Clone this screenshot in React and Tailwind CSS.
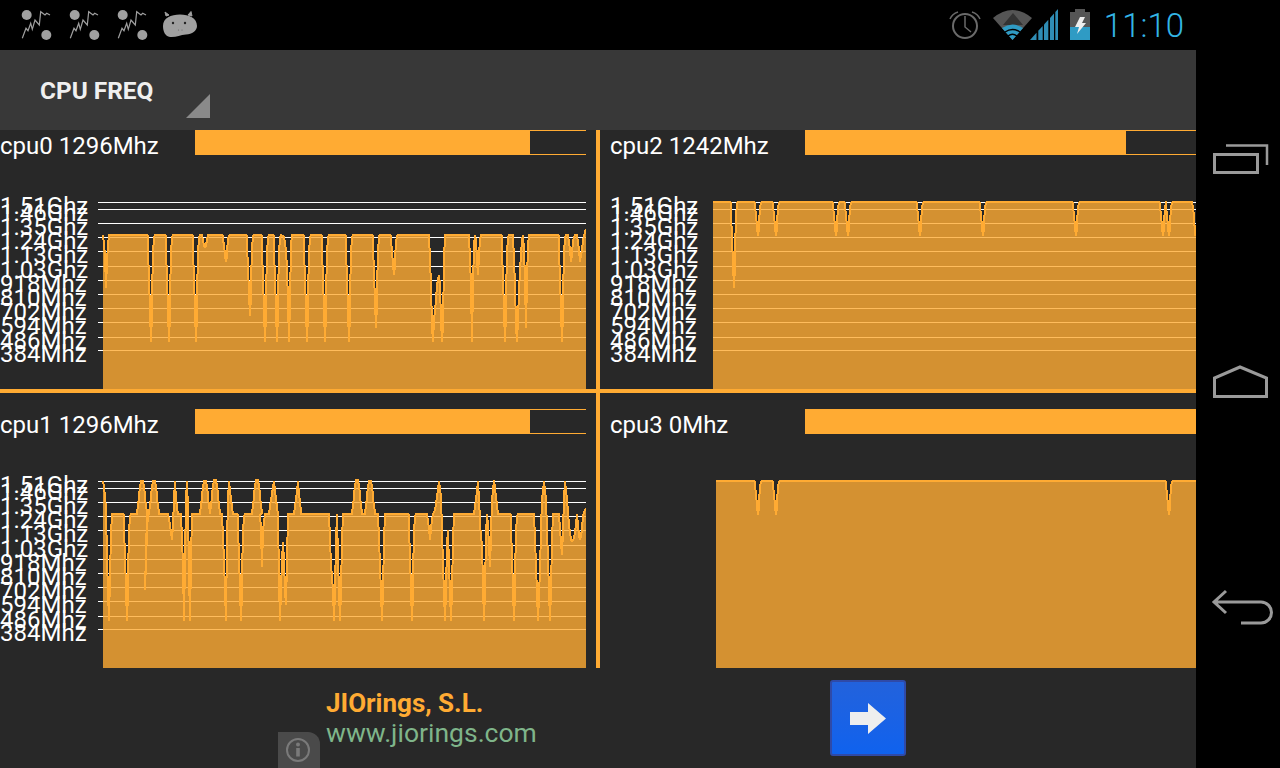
const ORANGE = "#ffab33";

function dip(c, b, T) {
  const D = b - T;
  return [[c - 3.5, T], [c - 2.8, T + 0.06 * D], [c - 2.2, T + 0.47 * D], [c - 1.6, T + 0.5 * D], [c - 1, T + 0.85 * D], [c - 0.4, T + 0.86 * D], [c, b], [c + 0.4, T + 0.86 * D], [c + 1, T + 0.85 * D], [c + 1.4, T + 0.5 * D], [c + 1.7, T + 0.18 * D], [c + 3, T + 0.04 * D], [c + 3.6, T]];
}
function peak(c, y, T) {
  const H = T - y;
  return [[c - 5, T], [c - 4, T - 0.3 * H], [c - 3, T - 0.45 * H], [c - 2.5, T - 0.7 * H], [c - 1, y], [c + 1, y], [c + 2.5, T - 0.7 * H], [c + 3, T - 0.45 * H], [c + 4, T - 0.3 * H], [c + 5, T]];
}

const T0 = 235;
const d0 = (c, b) => dip(c, b, T0);
const cpu0 = [
  [103, 235], [104, 245], [105, 255], [106, 288], [107, 262], [108, 245], [109, 235],
  ...d0(151, 342), ...d0(169, 342), ...d0(196, 342),
  [200, 235], [202, 235], [204, 245], [205, 248], [206, 245], [208, 235],
  ...d0(226, 262), ...d0(250, 316), ...d0(265, 342), ...d0(277, 342),
  [281, 235], [284, 237], [286, 250], [287, 270], [288, 300], [289, 342], [290, 300], [291, 245], [292, 235],
  ...d0(307, 342), ...d0(325, 342), ...d0(349, 342), ...d0(376, 328), ...d0(394, 275),
  [429, 235], [431, 285], [432, 325], [433, 342], [434, 320], [436, 300], [437, 285], [439, 275], [440, 285], [441, 320], [442, 342], [443, 325], [444, 260], [445, 235],
  [469, 235], [471, 285], [472, 342], [473, 285], [474, 245], [475, 235], [476, 240], [477, 260], [478, 275], [479, 255], [480, 240], [481, 235],
  ...d0(505, 342),
  [513, 235], [515, 285], [516, 325], [517, 342], [518, 320], [519, 290], [520, 270], [521, 255], [522, 240], [523, 235], [524, 250], [525, 280], [526, 328], [527, 280], [528, 245], [529, 235],
  ...d0(562, 342),
  [566, 235], [568, 235], [570, 250], [571, 262], [572, 255], [573, 240], [575, 235], [577, 235], [579, 250], [580, 262], [581, 255], [582, 250], [583, 240], [585, 232], [586, 229],
];

const T1 = 514;
const d1 = (c, b = 621) => dip(c, b, T1);
const p1 = (c, y = 481) => peak(c, y, T1);
const cpu1 = [
  [103, 481], [104, 487], [105, 497], [106, 508], [107, 560], [108, 590], [109, 621], [110, 575], [111, 535], [112, 514],
  ...d1(127), ...p1(142),
  [145, 590], [146, 560], [147, 530], [148, 514],
  ...p1(154),
  [168, 514], [170, 525], [172, 540], [173, 525], [174, 500], [175, 481], [176, 500], [178, 514], [181, 514], [183, 565], [184, 621], [185, 560], [186, 500], [187, 481], [188, 510], [189, 570], [190, 621], [191, 560], [192, 514],
  ...p1(205), ...p1(215, 480),
  [222, 514], [224, 560], [226, 621], [227, 540], [228, 500], [229, 481], [231, 500], [233, 514], [237, 514],
  ...d1(241), ...p1(257, 480),
  [260, 514], [261, 530], [262, 567], [263, 530], [265, 514], [269, 514], [271, 500], [274, 481], [276, 500], [278, 514], [279, 580], [280, 621], [281, 590], [282, 560], [283, 542], [284, 560], [285, 590], [286, 605], [287, 560], [288, 514],
  [294, 514], [296, 500], [298, 481], [299, 495], [300, 500], [301, 514],
  [329, 514], [331, 565], [333, 590], [334, 621], [335, 590], [336, 540], [337, 514], [338, 560], [339, 590], [340, 621], [341, 590], [342, 540], [343, 514],
  ...p1(357, 480), ...p1(370),
  [378, 514], [380, 565], [382, 621], [383, 590], [384, 540], [385, 514],
  ...d1(412),
  [427, 514], [429, 528], [430, 540], [431, 528], [433, 514], [435, 510], [437, 497], [439, 481], [441, 497], [442, 530], [443, 565], [445, 621], [446, 590], [447, 545], [448, 530], [449, 565], [451, 621], [452, 590], [453, 540], [454, 514],
  [474, 514], [476, 500], [478, 481], [479, 500], [481, 540], [482, 542], [483, 585], [484, 621], [485, 590], [486, 535], [487, 514], [488, 525], [489, 545], [490, 567], [491, 535], [492, 500], [494, 480], [496, 497], [498, 514],
  ...d1(514),
  [534, 514], [536, 565], [538, 621], [540, 570], [541, 530], [542, 500], [544, 481], [546, 500], [548, 560], [550, 621], [551, 590], [552, 540], [553, 514],
  [559, 514], [560, 530], [562, 555], [563, 530], [564, 500], [565, 481], [567, 500], [569, 525], [571, 540], [572, 542], [574, 538], [576, 525], [577, 514], [578, 525], [579, 535], [580, 540], [582, 530], [583, 515], [585, 510], [586, 508],
];

const T2 = 202;
const d2 = (c, b = 236) => dip(c, b, T2);
const cpu2 = [
  [713, 202],
  ...d2(734, 288), ...d2(758), ...d2(776), ...d2(836), ...d2(848), ...d2(920), ...d2(983), ...d2(1076), ...d2(1163), ...d2(1169),
  [1192, 202], [1193, 208], [1194, 215], [1195, 236], [1196, 225],
];
const T3 = 481;
const d3 = (c) => dip(c, 515, T3);
const cpu3 = [[716, 481], ...d3(758), ...d3(776), ...d3(1169), [1196, 481]];

const GRID = [202, 209, 223, 237, 251, 266, 280, 294, 308, 322, 337, 350];
const LABELS = ["1.51Ghz", "1.46Ghz", "1.35Ghz", "1.24Ghz", "1.13Ghz", "1.03Ghz", "918Mhz", "810Mhz", "702Mhz", "594Mhz", "486Mhz", "384Mhz"];

function Chart({ x0, y0, w, h, data, gridFrom, labelX, dy, showGrid }) {
  const line = data.map((p) => p.join(",")).join(" ");
  const fx = data[0][0];
  const lx = data[data.length - 1][0];
  const bottom = y0 + h;
  return (
    <svg width={w} height={h} viewBox={`${x0} ${y0} ${w} ${h}`} className="block">
      {showGrid && GRID.map((g, i) => (
        <g key={g}>
          <line x1={gridFrom} x2={x0 + w} y1={g + dy + 0.5} y2={g + dy + 0.5} stroke="#ffffff" strokeWidth="1" shapeRendering="crispEdges" />
          <text x={labelX} y={g + dy + 12} fill="#ffffff" fontSize="24">{LABELS[i]}</text>
        </g>
      ))}
      <polygon points={`${fx},${bottom} ${line} ${lx},${bottom}`} fill={ORANGE} fillOpacity="0.8" />
      <polyline points={line} fill="none" stroke={ORANGE} strokeWidth="2" strokeLinejoin="bevel" shapeRendering="crispEdges" />
    </svg>
  );
}

function Panel({ name, pct, right, top, x0, y0, h, data, gridFrom, labelX, dy, showGrid }) {
  return (
    <div className={`flex flex-col ${top ? "pt-[16px]" : ""}`}>
      <div className={`flex h-[25px] ${right ? "pl-[10px]" : "w-[586px]"}`}>
        <div className="w-[195px] shrink-0 text-[24px] leading-[33px] text-white whitespace-nowrap">{name}</div>
        <div className="flex-1 h-[25px] border-y border-[#ffab33]">
          <div className="h-[25px] -mt-px bg-[#ffab33]" style={{ width: `${pct}%` }} />
        </div>
      </div>
      <Chart x0={x0} y0={y0} w={right ? 596 : 586} h={h} data={data} gridFrom={gridFrom} labelX={labelX} dy={dy} showGrid={showGrid} />
    </div>
  );
}

function NetIcon() {
  return (
    <svg width="48" height="50" viewBox="16 0 48 50" className="shrink-0">
      <circle cx="26.7" cy="15" r="5" fill="#a0a0a0" />
      <circle cx="46.3" cy="35" r="5" fill="#a0a0a0" />
      <polyline points="22.3,38.3 26,28.3 28,30.7 30.7,23.3 32.3,29.3 35,20 39.3,25 40.7,11.7 45,15 46.7,13.3 50,15" fill="none" stroke="#a0a0a0" strokeWidth="1.2" />
    </svg>
  );
}

function AndroidHead() {
  return (
    <svg width="40" height="50" viewBox="160 0 40 50" className="shrink-0">
      <path d="M166 16 L165 12 L169 15 Z M188 15 L191 11.5 L192 16 Z" fill="#a0a0a0" stroke="#a0a0a0" strokeWidth="1" />
      <path d="M163 26 C163 18 171 14.5 180 14.5 C189 14.5 197 18 197 26 C197 31 192 34 186 34.5 C180 35 176 37.5 170 37 C165 36.5 163 31 163 26 Z" fill="#a0a0a0" />
      <circle cx="173" cy="23" r="1.2" fill="#222" />
      <circle cx="185" cy="23" r="1.2" fill="#222" />
      <circle cx="178.5" cy="30" r="0.6" fill="#666" />
      <circle cx="182" cy="30" r="0.6" fill="#666" />
    </svg>
  );
}

function Alarm() {
  return (
    <svg width="32" height="50" viewBox="949 0 32 50" className="shrink-0">
      <circle cx="965" cy="26" r="12" fill="none" stroke="#6a6a6a" strokeWidth="2" />
      <polyline points="965,16 965,27 971,32" fill="none" stroke="#6a6a6a" strokeWidth="1.5" />
      <path d="M950 19 Q952 14 958 12 M980 19 Q978 14 972 12" fill="none" stroke="#6a6a6a" strokeWidth="1.5" />
    </svg>
  );
}

function Wifi() {
  return (
    <svg width="40" height="50" viewBox="993 0 40 50" className="shrink-0">
      <path d="M1012.5 40 L993 18 Q1012.5 2 1032 18 Z" fill="#555555" />
      <path d="M1013 13 L1023 25 L1003 25 Z" fill="#333333" />
      <path d="M1012.5 40 L1002 28 Q1012.5 21 1023 28 Z" fill="#2f9bc4" />
      <path d="M1005 32 Q1012.5 27 1020 32 M1008 36 Q1012.5 32.5 1017 36" fill="none" stroke="#000000" strokeWidth="1.5" />
    </svg>
  );
}

function Signal() {
  return (
    <svg width="28" height="50" viewBox="1030 0 28 50" className="-ml-[3px] shrink-0">
      <polygon points="1030,40 1036.5,32.8 1036.5,40" fill="#2f8db5" />
      <polygon points="1038.3,30.8 1042.7,26 1042.7,40 1038.3,40" fill="#2f8db5" />
      <polygon points="1044,24.5 1048.3,19.8 1048.3,40 1044,40" fill="#2f8db5" />
      <polygon points="1050,18 1054,13.5 1054,40 1050,40" fill="#2f8db5" />
      <polygon points="1055.3,12 1058,9 1058,40 1055.3,40" fill="#2f8db5" />
    </svg>
  );
}

function Battery() {
  return (
    <svg width="20" height="50" viewBox="1070 0 20 50" className="shrink-0">
      <rect x="1075" y="9" width="10" height="3" fill="#555555" />
      <rect x="1070" y="12" width="20" height="15" fill="#555555" />
      <rect x="1070" y="27" width="20" height="13" fill="#2f9bc4" />
      <polygon points="1080,17 1085,17 1082,23 1086,23 1077,34 1079,27 1075,27" fill="#eeeeee" />
    </svg>
  );
}

function StatusBar() {
  return (
    <div className="flex h-[50px] items-start bg-black pl-[16px] pr-[96px]">
      <NetIcon />
      <NetIcon />
      <NetIcon />
      <AndroidHead />
      <div className="ml-auto flex items-start">
        <Alarm />
        <div className="w-[12px]" />
        <Wifi />
        <Signal />
        <div className="w-[12px]" />
        <Battery />
        <div className="w-[14px] shrink-0" />
        <div className="text-[33px] leading-[52px] font-light text-[#33b5e5] whitespace-nowrap">11:10</div>
      </div>
    </div>
  );
}

function NavBar() {
  return (
    <div className="flex w-[84px] flex-col items-center bg-black pt-[93px]">
      <svg width="60" height="32" viewBox="1208 143 60 32" className="shrink-0 overflow-visible">
        <rect x="1214.5" y="154.5" width="43" height="18" fill="none" stroke="#9a9a9a" strokeWidth="3" />
        <polyline points="1226,145.5 1267,145.5 1267,165" fill="none" stroke="#9a9a9a" strokeWidth="2.5" />
      </svg>
      <svg width="60" height="36" viewBox="1208 364 60 36" className="mt-[189px] shrink-0 overflow-visible">
        <polygon points="1214.5,396.5 1214.5,378 1240,367 1266.5,378 1266.5,396.5" fill="none" stroke="#9a9a9a" strokeWidth="3" />
      </svg>
      <svg width="60" height="38" viewBox="1208 589 60 38" className="mt-[189px] shrink-0 overflow-visible">
        <path d="M1226 591 L1214 602 L1226 613 M1214 602 L1261 602 A10.5 10.5 0 0 1 1261 623 L1241 623" fill="none" stroke="#9a9a9a" strokeWidth="3" />
      </svg>
    </div>
  );
}

function Footer() {
  return (
    <div className="relative flex h-[100px] bg-[#282828]">
      <div className="absolute left-[278px] bottom-0 flex h-[36px] w-[42px] items-center justify-center rounded-tr-[12px] bg-[#4a4a4a]">
        <svg width="26" height="26" viewBox="0 0 26 26" className="-ml-[2px]">
          <circle cx="13" cy="13" r="11" fill="none" stroke="#7a7a7a" strokeWidth="2" />
          <rect x="11.2" y="11" width="3.6" height="8.5" fill="#7a7a7a" />
          <circle cx="13" cy="7.5" r="2" fill="#7a7a7a" />
        </svg>
      </div>
      <div className="ml-[326px] flex w-[504px] flex-col pt-[20px]">
        <div className="text-[26px] leading-[30px] font-bold text-[#ffab33] whitespace-nowrap">JIOrings, S.L.</div>
        <div className="text-[26.5px] leading-[30px] text-[#7fb58a] whitespace-nowrap">www.jiorings.com</div>
      </div>
      <div className="mt-[12px] flex h-[76px] w-[76px] items-center justify-center rounded-[3px] border-[2px] border-[#2f4aa8] bg-gradient-to-b from-[#2262dc] to-[#0f62ee]">
        <svg width="40" height="34" viewBox="848 701 40 34">
          <polygon points="850,712 868,712 868,703 886,718.5 868,734 868,725 850,725" fill="#eeeeee" />
        </svg>
      </div>
    </div>
  );
}

export default function App() {
  return (
    <div className="h-[768px] w-[1280px] overflow-hidden bg-black font-['Roboto',sans-serif]">
      <StatusBar />
      <div className="flex h-[718px]">
        <div className="flex w-[1196px] flex-col">
          <div className="flex h-[80px] items-start bg-[#383838]">
            <div className="ml-[40px] mt-[26px] w-[113px] text-[24.4px] leading-[30px] font-bold text-[#f0f0f0] whitespace-nowrap">CPU FREQ</div>
            <svg width="24" height="24" viewBox="0 0 24 24" className="ml-[33px] mt-[44px]">
              <polygon points="0,24 24,24 24,0" fill="#8a8a8a" />
            </svg>
          </div>
          <div className="grid grid-cols-[596px_4px_596px] grid-rows-[259px_4px_275px] bg-[#282828]">
            <Panel name="cpu0 1296Mhz" pct={85.7} x0={0} y0={155} h={234} data={cpu0} gridFrom={98} labelX={0} dy={0} showGrid />
            <div className="bg-[#ffab33]" />
            <Panel name="cpu2 1242Mhz" pct={82.1} right x0={600} y0={155} h={234} data={cpu2} gridFrom={713} labelX={610} dy={0} showGrid />
            <div className="col-span-3 bg-[#ffab33]" />
            <Panel name="cpu1 1296Mhz" pct={85.7} top x0={0} y0={434} h={234} data={cpu1} gridFrom={98} labelX={0} dy={279} showGrid />
            <div className="bg-[#ffab33]" />
            <Panel name="cpu3 0Mhz" pct={100} right top x0={600} y0={434} h={234} data={cpu3} gridFrom={716} labelX={610} dy={279} showGrid={false} />
          </div>
          <Footer />
        </div>
        <NavBar />
      </div>
    </div>
  );
}
